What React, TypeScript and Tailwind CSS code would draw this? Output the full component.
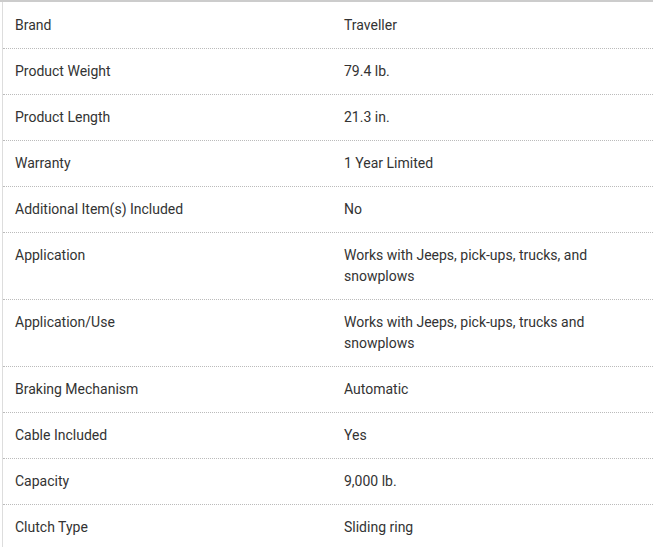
const specs: [string, string][] = [
  ['Brand', 'Traveller'],
  ['Product Weight', '79.4 lb.'],
  ['Product Length', '21.3 in.'],
  ['Warranty', '1 Year Limited'],
  ['Additional Item(s) Included', 'No'],
  ['Application', 'Works with Jeeps, pick-ups, trucks, and snowplows'],
  ['Application/Use', 'Works with Jeeps, pick-ups, trucks and snowplows'],
  ['Braking Mechanism', 'Automatic'],
  ['Cable Included', 'Yes'],
  ['Capacity', '9,000 lb.'],
  ['Clutch Type', 'Sliding ring'],
];

export default function App() {
  return (
    <div className="h-[547px] overflow-hidden bg-white font-['Roboto',sans-serif] text-[14px] leading-[21px] text-[#333]">
      <div className="border-t-2 border-[#cccccc]">
        <div className="ml-[2px] border-l border-[#dddddd] pt-px">
          {specs.map(([label, value]) => (
            <div
              key={label}
              className="grid grid-cols-[329px_1fr] border-b border-dotted border-[#bbbbbb]"
            >
              <div className="px-3 py-3">{label}</div>
              <div className="px-3 py-3">{value}</div>
            </div>
          ))}
        </div>
      </div>
    </div>
  );
}
